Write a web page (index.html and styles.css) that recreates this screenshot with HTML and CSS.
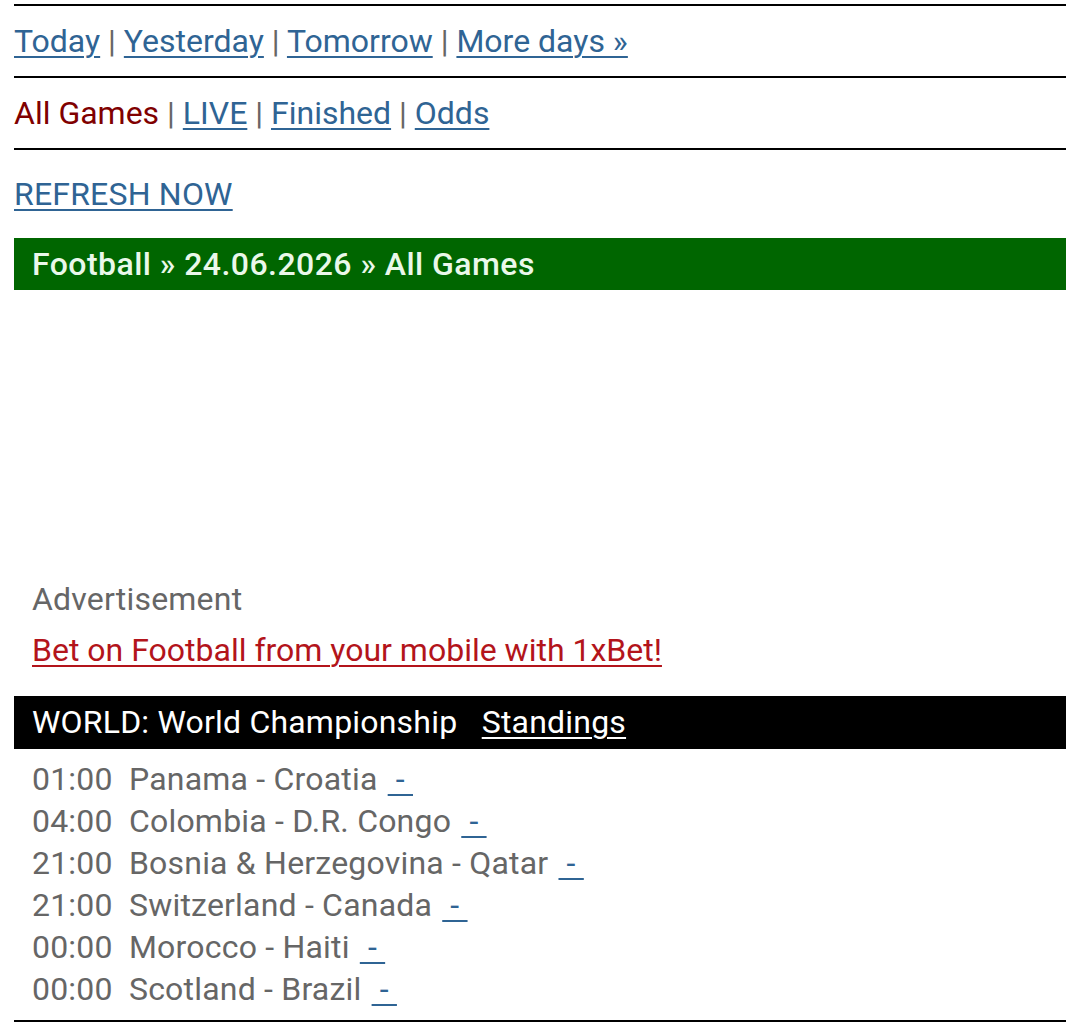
FILE: index.html
```html
<!DOCTYPE html>
<html lang="en">
<head>
  <meta charset="UTF-8" />
  <meta name="viewport" content="width=device-width, initial-scale=1.0" />
  <title>Football - 24.06.2026 - All Games</title>
  <link rel="stylesheet" href="styles.css">
</head>
<body>

  <hr class="line" />
  <p class="nav">
    <a href="#">Today</a> <span class="sep">|</span>
    <a href="#">Yesterday</a> <span class="sep">|</span>
    <a href="#">Tomorrow</a> <span class="sep">|</span>
    <a href="#">More days &raquo;</a>
  </p>
  <hr class="line" />
  <p class="nav">
    <span class="current">All Games</span> <span class="sep">|</span>
    <a href="#">LIVE</a> <span class="sep">|</span>
    <a href="#">Finished</a> <span class="sep">|</span>
    <a href="#">Odds</a>
  </p>
  <hr class="line" />

  <p class="refresh"><a href="#">REFRESH NOW</a></p>

  <div class="crumbs">Football &raquo; 24.06.2026 &raquo; All Games</div>

  <div class="ad-slot"></div>

  <div class="ad-text">
    <div class="ad-label">Advertisement</div>
    <a class="ad-link" href="#">Bet on Football from your mobile with 1xBet!</a>
  </div>

  <div class="league">
    WORLD: World Championship&nbsp;&nbsp; <a href="#">Standings</a>
  </div>

  <div class="games">
    <div class="game">01:00&nbsp; Panama - Croatia <a href="#">&nbsp;-&nbsp;</a></div>
    <div class="game">04:00&nbsp; Colombia - D.R. Congo <a href="#">&nbsp;-&nbsp;</a></div>
    <div class="game">21:00&nbsp; Bosnia &amp; Herzegovina - Qatar <a href="#">&nbsp;-&nbsp;</a></div>
    <div class="game">21:00&nbsp; Switzerland - Canada <a href="#">&nbsp;-&nbsp;</a></div>
    <div class="game">00:00&nbsp; Morocco - Haiti <a href="#">&nbsp;-&nbsp;</a></div>
    <div class="game">00:00&nbsp; Scotland - Brazil <a href="#">&nbsp;-&nbsp;</a></div>
  </div>
  <hr class="line" />

</body>
</html>
```

FILE: styles.css
```css
body {
  margin: 4px 14px;
  font-family: Roboto, "Noto Sans", Arial, sans-serif;
  font-size: 32px;
  letter-spacing: 0.2px;
  line-height: 42px;
  color: #666;
  background: #fff;
}
a {
  color: #2f6494;
  text-decoration: underline;
  text-underline-offset: 4px;
  text-decoration-thickness: 2px;
}
.line {
  margin: 0;
  border: none;
  height: 2px;
  background: #000;
}
.nav {
  margin: 0;
  padding: 14px 0;
  letter-spacing: 0;
}
.sep {
  color: #666;
}
.current {
  color: #800000;
}
.refresh {
  margin: 0;
  padding: 23px 0;
}
.crumbs {
  background: #006600;
  color: #eaf8ea;
  font-weight: 500;
  letter-spacing: 0.45px;
  height: 52px;
  line-height: 52px;
  padding: 0 18px;
}
.ad-slot {
  height: 288px;
}
.ad-text {
  padding: 0 18px 25px;
}
.ad-label {
  color: #666;
}
.ad-link {
  display: inline-block;
  margin-top: 9px;
  letter-spacing: 0;
  color: #b3141b;
}
.league {
  background: #000;
  color: #fff;
  height: 53px;
  line-height: 53px;
  padding: 0 18px;
}
.league a {
  color: #fff;
}
.games {
  padding: 9px 18px 10px;
}
.game {
  height: 42px;
}
.game a {
  padding: 0 2px;
}
```
